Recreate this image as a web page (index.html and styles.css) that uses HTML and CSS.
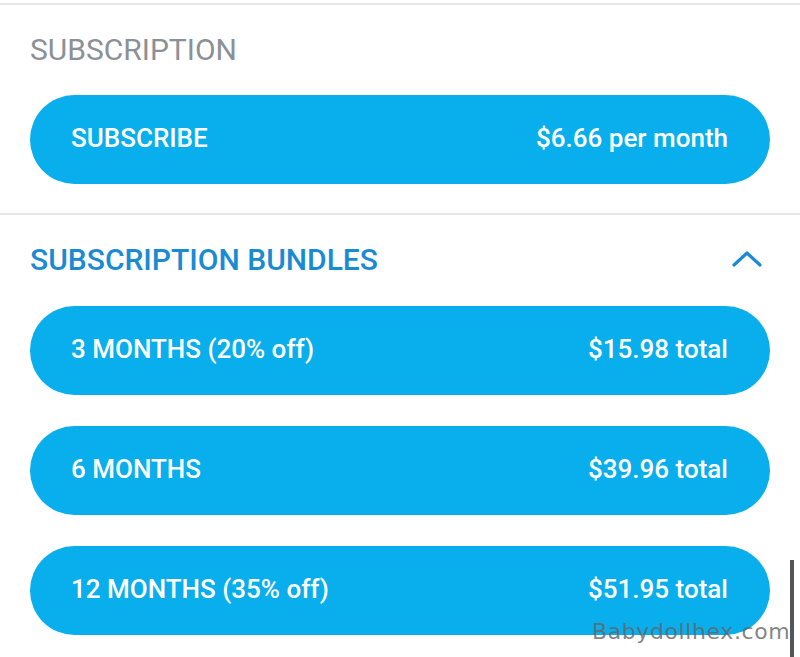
FILE: index.html
```html
<!DOCTYPE html>
<html>
<head>
<meta charset="utf-8">
<link rel="stylesheet" href="styles.css">
</head>
<body>
<div class="rule top"></div>
<section class="group">
  <div class="head"><span class="title gray">SUBSCRIPTION</span></div>
  <div class="pill"><span>SUBSCRIBE</span><span>$6.66 per month</span></div>
</section>
<div class="rule mid"></div>
<section class="group">
  <div class="head"><span class="title blue">SUBSCRIPTION BUNDLES</span>
    <svg class="chev" width="30" height="20" viewBox="0 0 30 20"><polyline points="2,16 15,4 28,16" fill="none" stroke="#1a8bd3" stroke-width="3.2" stroke-linecap="round" stroke-linejoin="round"/></svg>
  </div>
  <div class="list">
    <div class="pill"><span>3 MONTHS (20% off)</span><span>$15.98 total</span></div>
    <div class="pill"><span>6 MONTHS</span><span>$39.96 total</span></div>
    <div class="pill"><span>12 MONTHS (35% off)</span><span>$51.95 total</span></div>
  </div>
</section>
<div class="scrollbar"></div>
<div class="watermark">Babydollhex.com</div>
</body>
</html>
```
FILE: styles.css
```css
html, body { margin: 0; padding: 0; background: #fff; }
body {
  width: 800px; height: 657px; overflow: hidden; position: relative;
  font-family: Roboto, "Noto Sans", sans-serif;
}
.rule { height: 2px; background: #e6e6e8; }
.rule.top { margin-top: 3px; }
.rule.mid { margin-top: 29px; }
.group { padding: 0 30px; }
.head {
  height: 90px; display: flex; align-items: center; justify-content: space-between;
  padding-bottom: 2px; box-sizing: border-box;
}
.title { font-size: 30px; letter-spacing: 0; }
.gray { color: #8c9097; font-weight: 400; }
.blue { color: #1a8bd3; font-weight: 500; }
.chev { margin-right: 8px; }
.list { display: flex; flex-direction: column; gap: 31px; margin-top: 1px; }
.pill {
  height: 89px; border-radius: 45px; background: #09aeec;
  display: flex; align-items: center; justify-content: space-between;
  padding: 0 42px 3px 41px; box-sizing: border-box;
  color: #fff; font-size: 26px; font-weight: 500;
}
.scrollbar {
  position: absolute; left: 790px; top: 560px; width: 4px; height: 97px; background: #555;
}
.watermark {
  position: absolute; left: 592px; top: 619px; font-family: "DejaVu Sans", sans-serif;
  font-size: 22px; color: rgba(100,100,100,0.8); letter-spacing: 0.6px;
}
```
